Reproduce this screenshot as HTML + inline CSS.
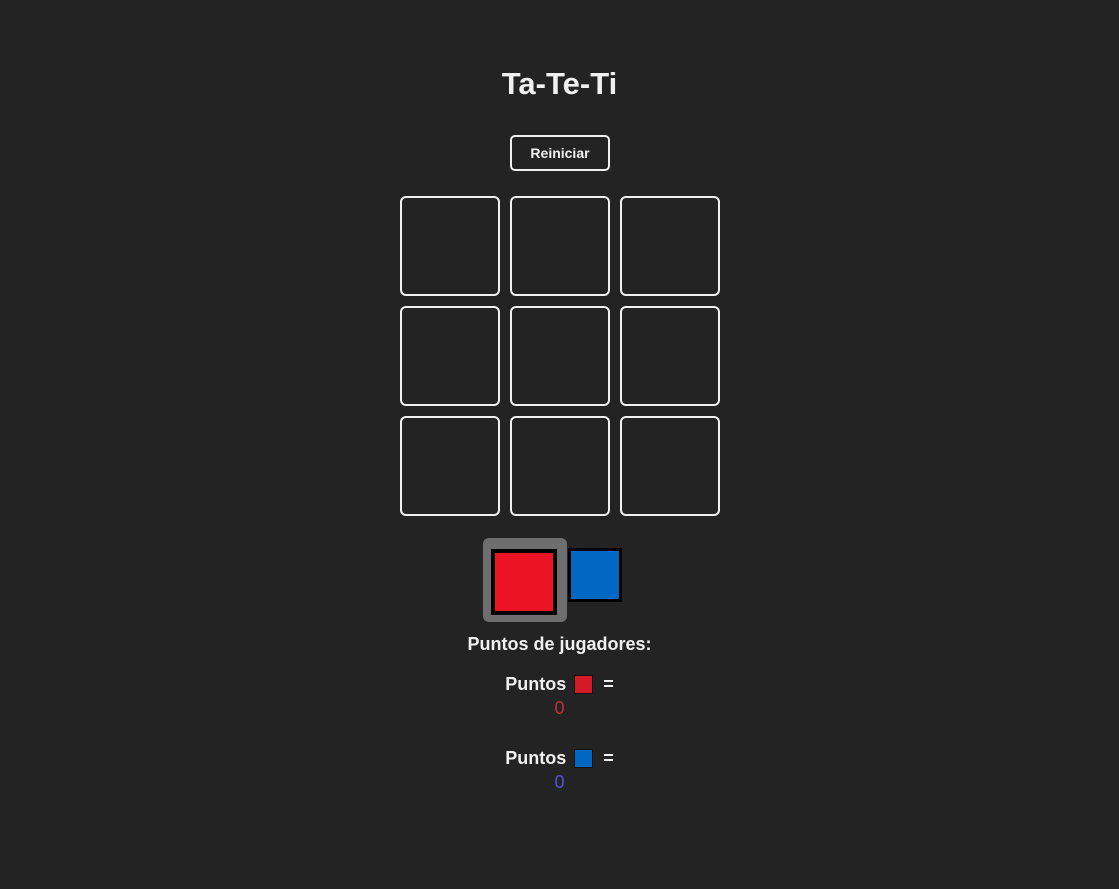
<!DOCTYPE html>
<html><head><meta charset="utf-8"><style>
html,body{margin:0;padding:0;background:#232323;width:1119px;height:889px;overflow:hidden;font-family:"Liberation Sans",sans-serif;color:#f0f0f0}
.abs{position:absolute}
h1{position:absolute;left:0;width:1119px;top:64px;margin:0;text-align:center;font-size:31px;font-weight:bold;line-height:40px}
.btn{left:510px;top:135px;width:96px;height:32px;border:2px solid #f0f0f0;border-radius:5px;text-align:center;line-height:32px;font-size:14px;font-weight:bold}
.cell{width:96px;height:96px;border:2px solid #f0f0f0;border-radius:6px}
.t{left:0;width:1119px;text-align:center;font-weight:bold;font-size:18px}
.sq{display:inline-block;width:17px;height:17px;border:1.5px solid #111;vertical-align:-4px;margin:0 10px 0 8px}
</style></head><body>
<h1>Ta-Te-Ti</h1>
<div class="abs btn">Reiniciar</div>
<div class="abs cell" style="left:400px;top:196px"></div>
<div class="abs cell" style="left:510px;top:196px"></div>
<div class="abs cell" style="left:620px;top:196px"></div>
<div class="abs cell" style="left:400px;top:306px"></div>
<div class="abs cell" style="left:510px;top:306px"></div>
<div class="abs cell" style="left:620px;top:306px"></div>
<div class="abs cell" style="left:400px;top:416px"></div>
<div class="abs cell" style="left:510px;top:416px"></div>
<div class="abs cell" style="left:620px;top:416px"></div>
<div class="abs" style="left:483px;top:538px;width:84px;height:84px;background:#6e6e6e;border-radius:6px"></div>
<div class="abs" style="left:491px;top:549px;width:58px;height:58px;background:#ec1324;border:4px solid #000"></div>
<div class="abs" style="left:568px;top:548px;width:48px;height:48px;background:#0068c2;border:3px solid #000"></div>
<div class="abs t" style="top:632px;line-height:24px">Puntos de jugadores:</div>
<div class="abs t" style="top:672px;line-height:24px">Puntos<span class="sq" style="background:#d41a27"></span>=</div>
<div class="abs t" style="top:696px;line-height:24px;font-weight:normal;color:#c0303a">0</div>
<div class="abs t" style="top:746px;line-height:24px">Puntos<span class="sq" style="background:#0068c2"></span>=</div>
<div class="abs t" style="top:770px;line-height:24px;font-weight:normal;color:#5a4fdc">0</div>
</body></html>
